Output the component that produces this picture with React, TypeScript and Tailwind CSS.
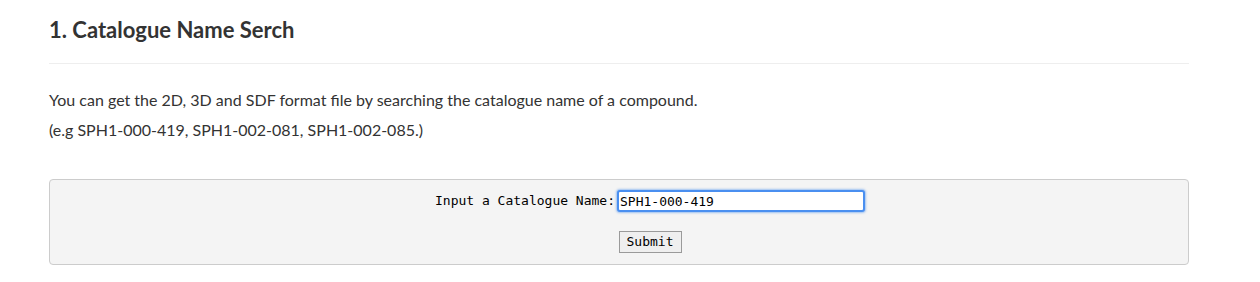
import React from "react";

export default function App() {
  return (
    <div className="w-[1260px] h-[282px] bg-white text-[#333]" style={{ fontFamily: "Lato, 'Open Sans', sans-serif" }}>
      <div className="mx-[49px] w-[1140px]">
        <div className="pt-[17px] pb-[20px] border-b border-[#eeeeee]">
          <h1 className="text-[22px] leading-[26px] font-bold">1. Catalogue Name Serch</h1>
        </div>
        <div className="pt-[21px] text-[16px] leading-[30px]">
          <p>You can get the 2D, 3D and SDF format file by searching the catalogue name of a compound.</p>
          <p>(e.g SPH1-000-419, SPH1-002-081, SPH1-002-085.)</p>
        </div>
        <div className="mt-[34px] h-[86px] rounded-[4px] border border-[#cccccc] bg-[#f4f4f4] pl-[62px] flex flex-col items-center pt-[10px]">
          <div className="flex items-center text-[13px] text-black" style={{ fontFamily: "'DejaVu Sans Mono', monospace" }}>
            <span>Input a Catalogue Name:</span>
            <input
              defaultValue="SPH1-000-419"
              className="ml-[2px] w-[248px] h-[22px] bg-white border-2 border-[#4a8ff0] rounded-[3px] px-[1px] text-[13px] outline-none shadow-[0_0_2px_1px_rgba(74,143,240,0.5)]"
              style={{ fontFamily: "'DejaVu Sans Mono', monospace" }}
            />
          </div>
          <button
            className="mt-[19px] w-[63px] h-[22px] bg-[#efefef] border border-[#9a9a9a] text-[13px] text-black"
            style={{ fontFamily: "'DejaVu Sans Mono', monospace" }}
          >
            Submit
          </button>
        </div>
      </div>
    </div>
  );
}
